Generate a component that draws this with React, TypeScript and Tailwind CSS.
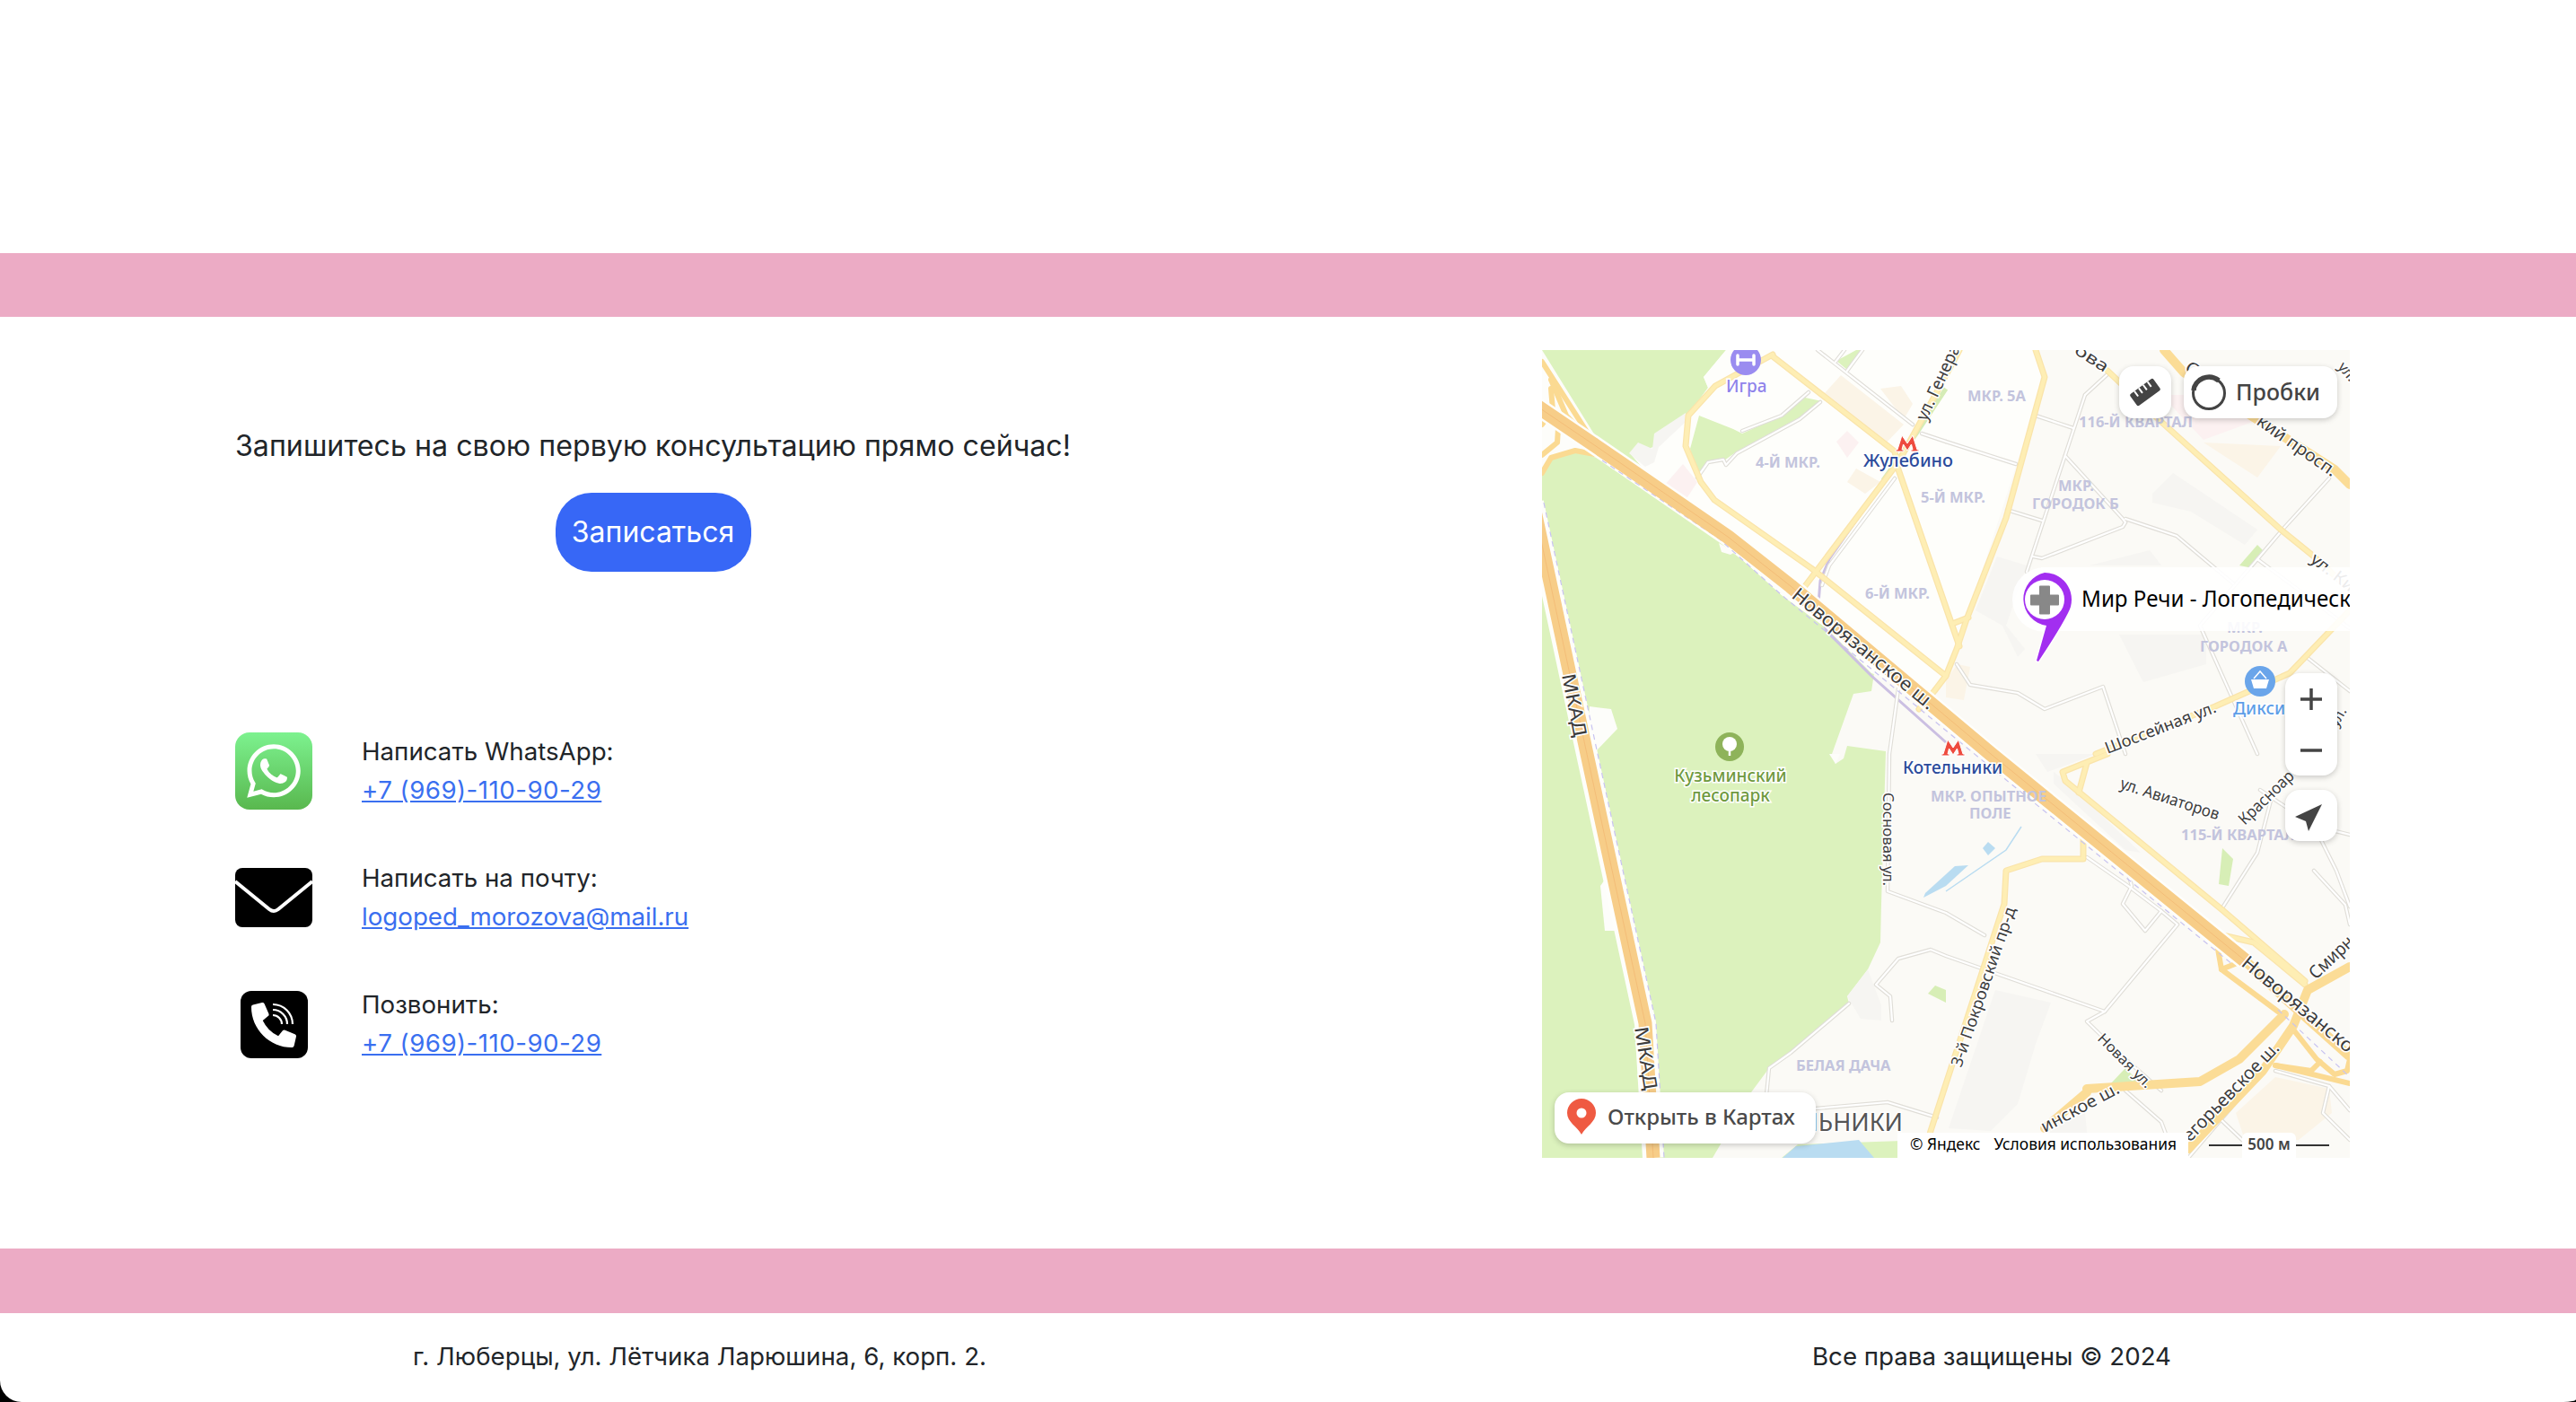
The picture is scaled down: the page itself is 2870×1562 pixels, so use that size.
import type { ReactNode } from 'react'
import { FaWhatsapp, FaPhoneAlt } from 'react-icons/fa'

// Линии карты: координаты в пикселях карты 900x900
const greyRoads = [
  '605,50 630,27', '605,50 540,247', '583,118 647,188 650,192', '650,188 707,207 770,260',
  '650,192 647,197 557,232 547,230', '550,73 592,87', '450,102 528,127', '518,178 557,190',
  '797,233 825,200 877,143', '797,233 733,307 797,450', '797,233 900,310', '853,343 900,380',
  '462,350 477,373 530,382 560,400 625,375 650,450', '307,0 413,83', '327,13 337,0', '340,23 357,0',
  '423,93 450,102', '223,90 267,73 297,47', '173,142 185,125 202,122 205,128 217,115 287,77 310,58',
  '393,143 320,240 312,262', '397,377 387,450 385,603 450,627 493,652',
  '607,565 653,597 690,625 708,640 627,737 450,675 433,668 397,678 372,707 388,720 390,747',
  '653,583 657,597 647,617 672,647 690,625', '627,737 607,748 650,790 690,825',
  '342,728 277,783 253,800 250,830', '305,845 385,838 440,855', '817,803 877,820 900,847',
  '803,803 720,900', '757,623 797,560 815,490', '800,490 860,530 900,540', '860,530 885,580 900,620',
  '860,580 895,618 900,640', '650,825 690,860 705,900', '757,858 780,880 810,900', '877,820 870,850 900,880',
]

const paleRoads = [
  '257,5 193,40 163,73 160,107 177,147 192,167 300,243 450,363',
  '290,267 397,125 430,65 465,0',
  '257,7 393,113 397,133 465,330',
  '550,0 560,30 517,187 473,300 462,333 450,363 437,380 420,400',
  '457,305 475,298',
  '630,23 690,80 823,200 860,230 900,267',
  '617,450 750,397 833,360 900,290',
  '630,450 580,470 583,480 757,623 850,703',
  '607,460 598,493',
  '603,540 603,567 557,567 517,580 515,617 433,870 425,900',
  '750,650 793,660 850,707',
]

const wideRoads = [
  '693,0 715,25 883,133 900,150',
  '607,823 733,815 777,790 827,740',
  '560,867 607,827',
  '720,890 803,803 837,753 853,713 900,687',
]

const ramps = [
  '757,690 820,737',
  '750,650 757,690 782,680',
  '837,757 863,790 883,807 897,803 900,790',
  '817,797 900,817',
  '867,793 857,803 817,797',
  '0,13 60,107', '10,33 27,73 60,107', '10,43 12,67 0,83', '7,77 18,87 17,103 0,117',
  '0,137 10,120 37,112 63,117',
]

const greyBlocks = [
  '97,115 107,103 123,110 125,93 160,70 160,80 130,108 125,125 115,130',
  '680,160 703,137 797,200 783,217 723,180 680,170',
  '483,290 507,230 540,240 517,307 538,333 530,342 513,307',
  '643,317 740,317 740,350 670,370',
  '610,240 677,223 690,240',
  '567,863 605,850 610,900 563,900',
  '453,867 505,713 567,727 550,773 530,840 500,870',
  '570,470 583,480 667,560 650,557 570,483',
  '550,450 617,450 583,463 563,470',
  '340,720 363,690 378,730 378,747 355,745',
]

const beigeBlocks = [
  '313,50 333,28 403,83 380,107',
  '377,43 400,40 413,60 403,77',
  '340,147 350,132 377,147 360,160',
  '737,103 823,107 797,142',
  '450,367 463,350 477,353 470,390 450,387',
  '773,850 817,810 877,823 880,850 843,880 783,880',
]

const labels: [string, number, number][] = [
  ['4-Й МКР.', 238, 131], ['5-Й МКР.', 422, 170], ['6-Й МКР.', 360, 277], ['МКР. 5А', 474, 57],
  ['116-Й КВАРТАЛ', 598, 86], ['МКР.', 575, 157], ['ГОРОДОК Б', 546, 177], ['МКР.', 763, 315],
  ['ГОРОДОК А', 733, 336], ['МКР. ОПЫТНОЕ', 433, 503], ['ПОЛЕ', 476, 522], ['115-Й КВАРТАЛ', 712, 546],
  ['БЕЛАЯ ДАЧА', 283, 803],
]

// подпись, x, y, поворот, размер, длина
const streets: [string, number, number, number, number, number][] = [
  ['Новорязанское ш.', 277, 275, 39.5, 21, 199],
  ['Новорязанско', 778, 685, 39.5, 21, 155],
  ['МКАД', 22, 362, 79, 21, 71],
  ['МКАД', 103, 755, 81, 21, 71],
  ['ул. Генерала', 428, 80, -65, 19, 112],
  ['Шоссейная ул.', 630, 450, -21, 18, 131],
  ['ул. Авиаторов', 643, 488, 18, 18, 115],
  ['Красноар', 783, 530, -44, 18, 78],
  ['кий просп.', 795, 82, 35, 19, 104],
  ['С', 715, 22, 35, 19, 14],
  ['ова', 592, 3, 33, 18, 41],
  ['ул. Ки', 855, 235, 38, 18, 57],
  ['ул.', 886, 19, 50, 16, 22],
  ['ул.', 886, 421, -60, 16, 22],
  ['Сосновая ул.', 380, 493, 90, 17, 104],
  ['3-й Покровский пр-д', 467, 800, -71, 18, 187],
  ['Новая ул.', 618, 768, 45, 16, 78],
  ['инское ш.', 560, 872, -28, 19, 96],
  ['егорьевское ш.', 722, 883, -46, 20, 145],
  ['Смирн', 862, 702, -43, 20, 60],
]

function Lines({ items, color, width }: { items: string[]; color: string; width: number }) {
  return (
    <>
      {items.map((points, i) => (
        <polyline key={i} points={points} fill="none" stroke={color} strokeWidth={width} strokeLinejoin="round" strokeLinecap="round" />
      ))}
    </>
  )
}

function Blocks({ items, color }: { items: string[]; color: string }) {
  return (
    <>
      {items.map((points, i) => (
        <polygon key={i} points={points} fill={color} />
      ))}
    </>
  )
}

function MetroIcon({ x, y }: { x: number; y: number }) {
  return (
    <path
      transform={`translate(${x} ${y})`}
      d="M-11 8 L-6 -8 L0 1 L6 -8 L11 8 L13 8 L13 10 L4 10 L4 8 L6 8 L4.5 2 L0 9 L-4.5 2 L-6 8 L-4 8 L-4 10 L-13 10 L-13 8 Z"
      fill="#ee4b3e"
      stroke="#fff"
      strokeWidth="1"
    />
  )
}

function MapCanvas() {
  const main = '-5,63 60,107 207,208 277,263 500,450 783,680'
  const tail = '783,680 833,727 900,787'
  const mkad = '-10,170 50,450 115,750 124,900'
  return (
    <svg width="900" height="900" viewBox="0 0 900 900" className="block font-['Noto_Sans',sans-serif]">
      <rect width="900" height="900" fill="#fbfaf6" />

      {/* лес и зелёные участки */}
      <polygon points="0,0 205,0 180,30 185,42 163,72 125,98 125,108 98,115 118,138 60,105 0,10" fill="#dcf2bd" />
      <polygon points="0,140 8,122 37,110 67,123 197,210 267,273 317,310 370,360 367,380 347,383 323,450 327,461 336,455 340,441 383,447 378,617 377,660 363,690 340,720 342,728 277,783 253,800 233,827 190,900 0,900" fill="#dcf2bd" />
      <polygon points="0,0 62,100 70,122 37,110 8,122 0,140" fill="#fdfdfa" />
      <polygon points="205,0 550,0 560,30 473,300 450,363 437,385 367,360 317,310 267,273 197,210 118,138 98,115 125,108 125,98 163,72 185,42 180,30" fill="#fefefb" />
      <polygon points="175,73 213,88 223,93 267,73 293,53 312,57 287,75 217,113 203,123 185,123 173,140 165,110" fill="#dcf2bd" />
      <polygon points="328,12 350,0 358,0 340,22" fill="#dcf2bd" />
      <polygon points="53,397 77,400 84,422 60,447 50,440" fill="#fdfdfa" />
      <polygon points="65,597 70,590 83,647 70,647" fill="#fdfdfa" />
      <polygon points="197,215 215,225 210,228 200,225" fill="#fdfdfa" />
      <polygon points="320,450 332,450 327,461" fill="#fdfdfa" />
      <polygon points="758,555 770,567 765,597 754,595" fill="#d7eeb6" />
      <polygon points="650,800 667,817 633,818" fill="#d7eeb6" />
      <polygon points="430,717 438,708 450,713 450,727" fill="#d7eeb6" />
      <polygon points="777,240 797,217 803,223 787,242" fill="#d7eeb6" />
      <polygon points="267,900 285,885 430,880 440,900" fill="#dcf2bd" />

      <Blocks items={greyBlocks} color="#f6f5f2" />
      <Blocks items={beigeBlocks} color="#fbf4e7" />
      <Blocks items={['328,102 340,90 353,103 340,120', '137,150 157,127 173,147 160,167', '690,50 750,50 800,77 737,100']} color="#fcf1f1" />

      {/* вода */}
      <polygon points="268,900 283,887 353,880 370,900" fill="#b9dcf1" />
      <polygon points="425,610 427,605 460,575 475,574 450,597" fill="#b9dcf1" />
      <polygon points="491,555 497,548 505,555 497,563" fill="#b9dcf1" />
      <polyline points="534,531 517,557 450,603" fill="none" stroke="#b9dcf1" strokeWidth="1.5" />

      {/* метро */}
      <polyline points="450,43 417,93 380,145" fill="none" stroke="#d5ecb6" strokeWidth="5" />
      <polyline points="390,133 320,233 310,257 308,283 317,313 367,363 450,437" fill="none" stroke="#cbbfe2" strokeWidth="3" />

      {/* дороги */}
      <Lines items={greyRoads} color="#e0ded8" width={4.5} />
      <Lines items={greyRoads} color="#ffffff" width={2.2} />
      <Lines items={paleRoads} color="#fae4aa" width={7} />
      <Lines items={paleRoads} color="#feeeb4" width={4.5} />
      <Lines items={ramps} color="#fbda92" width={6} />
      <Lines items={wideRoads} color="#fbdc96" width={10} />

      <polyline points={mkad} fill="none" stroke="#fefefb" strokeWidth="24" />
      <polyline points="2,170 62,450 127,750 136,900" fill="none" stroke="#c8c3f0" strokeWidth="1.2" strokeDasharray="6 5" />
      <polyline points={mkad} fill="none" stroke="#f7cd88" strokeWidth="15" />
      <polyline points={mkad} fill="none" stroke="#f3bd78" strokeWidth="1" />

      <polyline points={main} fill="none" stroke="#fefefb" strokeWidth="21" />
      <polyline points="67,123 197,210 267,273 500,465 770,685" fill="none" stroke="#c8c3f0" strokeWidth="1.2" strokeDasharray="6 5" />
      <polyline points={main} fill="none" stroke="#f7cd88" strokeWidth="16" strokeLinejoin="round" />
      <polyline points={main} fill="none" stroke="#f3bd78" strokeWidth="1" />
      <polyline points={tail} fill="none" stroke="#fbda92" strokeWidth="11" />
      <polyline points="820,735 900,810" fill="none" stroke="#c8c3f0" strokeWidth="1.2" strokeDasharray="6 5" />

      {/* подписи районов */}
      {labels.map(([text, x, y]) => (
        <text key={text + x} x={x} y={y} fontSize="16.5" fontWeight="700" fill="#c3c4dd">
          {text}
        </text>
      ))}
      <text x="402" y="870" textAnchor="end" fontSize="27" fill="#555" stroke="#fff" strokeWidth="3" paintOrder="stroke">
        КОТЕЛЬНИКИ
      </text>

      {/* подписи улиц */}
      {streets.map(([text, x, y, rot, size, len]) => (
        <text
          key={text + x}
          transform={`translate(${x} ${y}) rotate(${rot})`}
          fontSize={size}
          fill="#3d3d3d"
          stroke="#fff"
          strokeWidth="3"
          paintOrder="stroke"
          textLength={len}
          lengthAdjust="spacingAndGlyphs"
        >
          {text}
        </text>
      ))}

      {/* метки */}
      <MetroIcon x={407} y={103} />
      <MetroIcon x={458} y={442} />
      <text x="358" y="130" fontSize="20" fontWeight="500" fill="#2b4b9b" stroke="#fff" strokeWidth="3" paintOrder="stroke" textLength="100" lengthAdjust="spacingAndGlyphs">Жулебино</text>
      <text x="402" y="472" fontSize="20" fontWeight="500" fill="#2b4b9b" stroke="#fff" strokeWidth="3" paintOrder="stroke" textLength="111" lengthAdjust="spacingAndGlyphs">Котельники</text>

      <circle cx="227" cy="11" r="17" fill="#9a8cf0" />
      <path d="M219 11h16M218 6v10M236 6v10" stroke="#fff" strokeWidth="3.5" strokeLinecap="round" fill="none" />
      <text x="205" y="47" fontSize="19" fontWeight="500" fill="#8f83ea" stroke="#fff" strokeWidth="3" paintOrder="stroke">Игра</text>

      <circle cx="800" cy="369" r="17" fill="#6aa5ea" />
      <path d="M790 367h20l-3 10h-14z" fill="#fff" />
      <path d="M793 366l7-8 7 8" fill="none" stroke="#fff" strokeWidth="1.5" />
      <text x="770" y="406" fontSize="19" fontWeight="500" fill="#5e9ee8" stroke="#fff" strokeWidth="3" paintOrder="stroke">Дикси</text>

      <circle cx="209" cy="442" r="16" fill="#8eb35a" />
      <circle cx="209" cy="439" r="8" fill="#fff" />
      <path d="M209 440v12" stroke="#fff" strokeWidth="2.5" />
      <g fontSize="19" fontWeight="500" fill="#6f9a40" stroke="#fff" strokeWidth="3" paintOrder="stroke" textAnchor="middle">
        <text x="210" y="481">Кузьминский</text>
        <text x="210" y="503">лесопарк</text>
      </g>

      {/* метка организации */}
      <path d="M556 242 H900 V313 H556 Z" fill="#fff" fillOpacity="0.9" />
      <circle cx="560" cy="278" r="36" fill="#fff" fillOpacity="0.9" />
      <text x="601" y="286" fontSize="26" fill="#000" textLength="300" lengthAdjust="spacingAndGlyphs">Мир Речи - Логопедическ</text>
      <path d="M560 248a30 30 0 0 1 26 45q-9 18-33 54l-2-1 11-39a30 30 0 0 1-2-59z" fill="#a22ef0" stroke="#fff" strokeWidth="3" paintOrder="stroke" />
      <circle cx="560" cy="278" r="22" fill="#fff" />
      <path d="M555 263.500h10v10h10v10h-10v10h-10v-10h-10v-10h10z" fill="#888" stroke="#888" strokeWidth="2" strokeLinejoin="round" />
    </svg>
  )
}

function YandexMap() {
  const panel = 'absolute bg-white shadow-[0_2px_6px_rgba(0,0,0,0.2)]'
  return (
    <div className="relative w-[900px] h-[900px] overflow-hidden shrink-0 font-['Noto_Sans',sans-serif]">
      <MapCanvas />

      {/* линейка */}
      <div className={`${panel} left-[643px] top-[18px] w-[58px] h-[58px] rounded-[16px] flex items-center justify-center`}>
        <svg width="36" height="36" viewBox="0 0 36 36">
          <g transform="rotate(-36 18 18)">
            <rect x="2" y="10" width="32" height="16" rx="2" fill="#444" />
            <path d="M9 10v7M15 10v7M21 10v7M27 10v7" stroke="#fff" strokeWidth="2" />
          </g>
        </svg>
      </div>

      {/* пробки */}
      <div className={`${panel} left-[715px] top-[18px] w-[171px] h-[58px] rounded-[16px] flex items-center pl-[7px] gap-[9px] pb-[1px]`}>
        <svg width="42" height="42" viewBox="0 0 42 42">
          <circle cx="21" cy="22" r="17.500" fill="none" stroke="#444" strokeWidth="3" />
          <path d="M4 19a17 16 0 0 1 28-11" fill="none" stroke="#444" strokeWidth="5.500" />
        </svg>
        <span className="text-[25px] font-medium text-[#444]">Пробки</span>
      </div>

      {/* масштаб */}
      <div className={`${panel} left-[828px] top-[360px] w-[58px] h-[114px] rounded-[16px] flex flex-col items-center justify-around`}>
        <svg width="26" height="26" viewBox="0 0 26 26">
          <path d="M13 1v24M1 13h24" stroke="#444" strokeWidth="3.500" />
        </svg>
        <svg width="26" height="26" viewBox="0 0 26 26">
          <path d="M1 13h24" stroke="#444" strokeWidth="3.500" />
        </svg>
      </div>

      {/* геолокация */}
      <div className={`${panel} left-[828px] top-[490px] w-[58px] h-[57px] rounded-[16px]`}>
        <svg width="58" height="57" viewBox="0 0 58 57">
          <path d="M41 16 L11 30 L23 35 L26 46 Z" fill="#444" />
        </svg>
      </div>

      {/* открыть в картах */}
      <div className={`${panel} left-[14px] top-[827px] w-[291px] h-[57px] rounded-[16px] flex items-center pl-[13px] gap-[12px] pb-[3px]`}>
        <svg width="34" height="42" viewBox="0 0 34 42">
          <path d="M17 1a16 16 0 0 1 16 16c0 10-11 15-16 24C12 32 1 27 1 17A16 16 0 0 1 17 1z" fill="#ef5a42" />
          <circle cx="17" cy="17" r="5.500" fill="#fff" />
        </svg>
        <span className="text-[24px] font-medium text-[#4a4a4a]">Открыть в Картах</span>
      </div>

      {/* копирайт */}
      <div className="absolute left-[396px] top-[872px] w-[324px] h-[28px] bg-white flex items-center pl-[14px] pb-[3px] text-[17.4px] text-black gap-[15px] whitespace-nowrap">
        <span>© Яндекс</span>
        <span>Условия использования</span>
      </div>

      {/* линейка масштаба */}
      <div className="absolute left-[743px] top-[872px] w-[134px] h-[28px] flex items-center">
        <div className="w-[37px] h-[2px] bg-[#333]" />
        <div className="w-[60px] h-[28px] bg-white rounded-t-[6px] flex items-center justify-center text-[17px] font-semibold text-[#444] pb-[3px]">500 м</div>
        <div className="w-[37px] h-[2px] bg-[#333]" />
      </div>
    </div>
  )
}

function ContactRow({ icon, label, href, link, phone }: { icon: ReactNode; label: string; href: string; link: string; phone?: boolean }) {
  return (
    <div className="flex h-[86px] items-center">
      <div className="w-[86px] h-[86px] flex items-center justify-center shrink-0">{icon}</div>
      <div className="ml-[55px] flex flex-col">
        <span className="leading-[43px] text-[#212529]">{label}</span>
        <a href={href} className={phone ? 'leading-[43px] text-[#3a6ff0] underline tracking-[0.47px]' : 'leading-[43px] text-[#3a6ff0] underline'}>
          {link}
        </a>
      </div>
    </div>
  )
}

export default function App() {
  return (
    <div className="bg-black h-[1562px] w-full overflow-hidden">
      <div className="bg-white h-full flex flex-col rounded-bl-[24px] rounded-br-[14px_3px] font-['Inter',sans-serif] text-[#212529] text-[27.7px]">
        <div className="h-[282px] shrink-0" />
        <div className="h-[71px] shrink-0 bg-[#ecabc5]" />

        <main className="flex-1 flex justify-between pl-[262px] pr-[252px] pt-[37px]">
          <div className="w-[931px] flex flex-col">
            <div className="flex flex-col items-center pt-[85px]">
              <p className="text-[32.2px] leading-[44px] whitespace-nowrap">Запишитесь на свою первую консультацию прямо сейчас!</p>
              <a href="#" className="mt-[30px] w-[218px] h-[88px] rounded-[40px] bg-[#3767f6] text-white text-[32px] flex items-center justify-center underline decoration-[#3767f6]">
                Записаться
              </a>
            </div>

            <div className="mt-[179px] flex flex-col gap-[55px]">
              <ContactRow
                phone
                href="#"
                label="Написать WhatsApp:"
                link="+7 (969)-110-90-29"
                icon={
                  <div className="w-[86px] h-[86px] rounded-[16px] bg-gradient-to-b from-[#7df28f] to-[#59b84e] flex items-center justify-center">
                    <FaWhatsapp className="text-white" size={68} />
                  </div>
                }
              />
              <ContactRow
                href="#"
                label="Написать на почту:"
                link="logoped_morozova@mail.ru"
                icon={
                  <svg width="86" height="66" viewBox="0 0 86 66">
                    <rect width="86" height="66" rx="8" fill="#000" />
                    <path d="M0 15 L38 46 Q43 50 48 46 L86 15" fill="none" stroke="#fff" strokeWidth="4" />
                  </svg>
                }
              />
              <ContactRow
                phone
                href="#"
                label="Позвонить:"
                link="+7 (969)-110-90-29"
                icon={
                  <div className="relative w-[75px] h-[75px] rounded-[12px] bg-black">
                    <FaPhoneAlt className="absolute left-[12px] top-[13px] text-white" size={50} />
                    <svg className="absolute inset-0" width="75" height="75" viewBox="0 0 75 75">
                      <path d="M36 27a10 10 0 0 1 10 10M36 21a16 16 0 0 1 16 16M36 15a22 22 0 0 1 22 22" fill="none" stroke="#fff" strokeWidth="2.200" />
                    </svg>
                  </div>
                }
              />
            </div>
          </div>

          <YandexMap />
        </main>

        <div className="h-[72px] shrink-0 bg-[#ecabc5]" />

        <footer className="h-[99px] shrink-0 flex items-center justify-between pl-[460px] pr-[451px] pb-[2px]">
          <span>г. Люберцы, ул. Лётчика Ларюшина, 6, корп. 2.</span>
          <span>Все права защищены © 2024</span>
        </footer>
      </div>
    </div>
  )
}
